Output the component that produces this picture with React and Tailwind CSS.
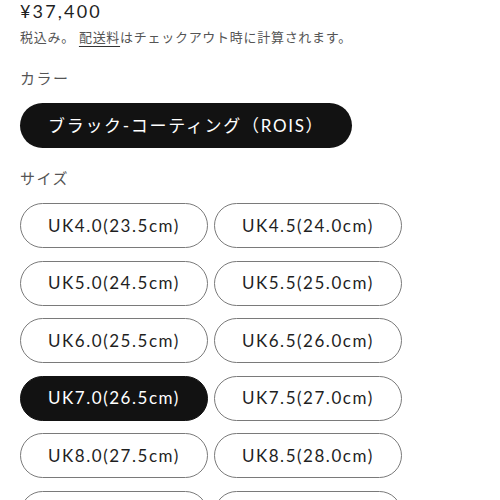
const sizes = [
  "UK4.0(23.5cm)",
  "UK4.5(24.0cm)",
  "UK5.0(24.5cm)",
  "UK5.5(25.0cm)",
  "UK6.0(25.5cm)",
  "UK6.5(26.0cm)",
  "UK7.0(26.5cm)",
  "UK7.5(27.0cm)",
  "UK8.0(27.5cm)",
  "UK8.5(28.0cm)",
  "UK9.0(28.5cm)",
  "UK9.5(29.0cm)",
];

export default function App() {
  const selected = "UK7.0(26.5cm)";

  return (
    <div className="w-[500px] h-[500px] overflow-hidden bg-white px-5 font-['Lato','Noto_Sans_CJK_JP',sans-serif]">
      {/* Price */}
      <p className="text-[18px] leading-[22px] tracking-[0.12em] text-[#1f1f1f]">¥37,400</p>
      <p className="mt-[5px] text-[13px] leading-[20px] tracking-[0.055em] text-[#555]">
        税込み。{" "}
        <span className="underline decoration-[#333] underline-offset-[4px]">配送料</span>
        はチェックアウト時に計算されます。
      </p>

      {/* Color */}
      <p className="mt-[20px] text-[15px] leading-[22px] tracking-[0.1em] text-[#555]">カラー</p>
      <div className="mt-[14px] flex">
        <button className="h-[45px] px-[28px] rounded-full bg-[#121212] text-white text-[17px] tracking-[0.1em]">
          ブラック-コーティング（ROIS）
        </button>
      </div>

      {/* Size */}
      <p className="mt-[19px] text-[15px] leading-[22px] tracking-[0.1em] text-[#555]">サイズ</p>
      <div className="mt-[14px] flex flex-wrap gap-x-[6px] gap-y-[12.5px]">
        {sizes.map((s) => (
          <button
            key={s}
            className={
              s === selected
                ? "h-[45px] px-[27px] rounded-full border border-[#121212] bg-[#121212] text-white text-[17px] tracking-[0.09em]"
                : "h-[45px] px-[27px] rounded-full border border-[#7a7a7a] bg-white text-[#1f1f1f] text-[17px] tracking-[0.09em]"
            }
          >
            {s}
          </button>
        ))}
      </div>
    </div>
  );
}
